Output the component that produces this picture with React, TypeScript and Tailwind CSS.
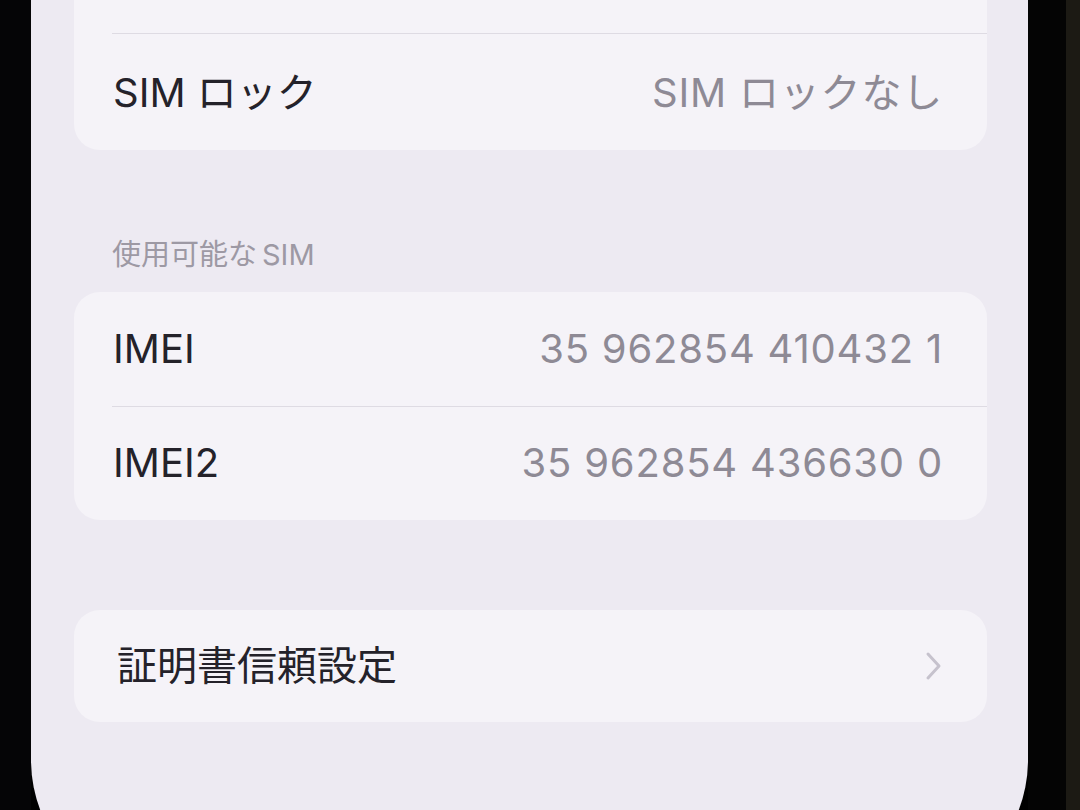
const FONT = "font-['Inter','Noto_Sans_CJK_JP',sans-serif]";

function Row({ label, value, chevron }: { label: string; value?: string; chevron?: boolean }) {
  return (
    <div className="flex h-[114px] items-center justify-between pl-[39px] pr-[44px]">
      <span className="text-[40px] leading-none text-[#24222a]">{label}</span>
      {value ? (
        <span className="text-[40px] leading-none tracking-[0.02em] text-[#8e8a95]">{value}</span>
      ) : null}
      {chevron ? (
        <svg width="18" height="30" viewBox="0 0 18 30" fill="none">
          <path
            d="M3 3 L14 15 L3 27"
            stroke="#c6c2cd"
            strokeWidth="3"
            strokeLinecap="round"
            strokeLinejoin="round"
          />
        </svg>
      ) : null}
    </div>
  );
}

function Divider() {
  return <div className="ml-[38px] h-px bg-[#dedbe3]" />;
}

export default function App() {
  return (
    <div className={`flex h-[810px] w-[1080px] overflow-hidden bg-black ${FONT}`}>
      {/* left bezel */}
      <div className="w-[31px] shrink-0 bg-[#050506]" />

      {/* screen */}
      <div className="h-[900px] flex-1 rounded-b-[140px] bg-[#edeaf2] pl-[43px] pr-[41px]">
        <div className="-mt-[81px] rounded-[26px] bg-[#f5f3f8]">
          <div className="h-[114px]" />
          <Divider />
          <div className="h-[2px]" />
          <Row label="SIM ロック" value="SIM ロックなし" />
        </div>

        <div className="mt-[87px] mb-[19px] pl-[38px] text-[29px] leading-[36px] text-[#9d99a4]">
          使用可能な<span className="ml-[5px]">SIM</span>
        </div>

        <div className="rounded-[26px] bg-[#f5f3f8]">
          <Row label="IMEI" value="35 962854 410432 1" />
          <Divider />
          <div className="-mt-px">
            <Row label="IMEI2" value="35 962854 436630 0" />
          </div>
        </div>

        <div className="mt-[90px] rounded-[26px] bg-[#f5f3f8]">
          <div className="h-[112px] pl-[4px] [&>div]:h-[112px]">
            <Row label="証明書信頼設定" chevron />
          </div>
        </div>
      </div>

      {/* right bezel */}
      <div className="flex w-[52px] shrink-0">
        <div className="w-[38px] bg-[#040404]" />
        <div className="flex-1 bg-[#1c1a14]" />
      </div>
    </div>
  );
}
